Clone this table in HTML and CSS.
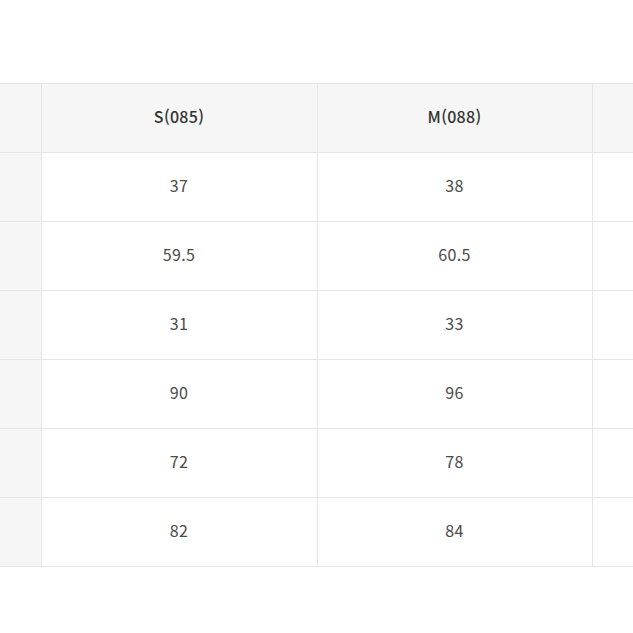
FILE: index.html
```html
<!DOCTYPE html>
<html lang="ko">
<head>
<meta charset="utf-8">
<link rel="stylesheet" href="styles.css">
</head>
<body>
<div class="wrap">
<table class="size-table">
  <colgroup>
    <col class="c-label"><col class="c-size"><col class="c-size2"><col class="c-size">
  </colgroup>
  <thead>
    <tr><th class="label"></th><th>S(085)</th><th>M(088)</th><th></th></tr>
  </thead>
  <tbody>
    <tr><th class="label"></th><td>37</td><td>38</td><td></td></tr>
    <tr><th class="label"></th><td>59.5</td><td>60.5</td><td></td></tr>
    <tr><th class="label"></th><td>31</td><td>33</td><td></td></tr>
    <tr><th class="label"></th><td>90</td><td>96</td><td></td></tr>
    <tr><th class="label"></th><td>72</td><td>78</td><td></td></tr>
    <tr><th class="label"></th><td>82</td><td>84</td><td></td></tr>
  </tbody>
</table>
</div>
</body>
</html>
```
FILE: styles.css
```css
html, body {
  margin: 0;
  padding: 0;
  background: #fff;
  overflow: hidden;
}
.wrap {
  padding-top: 83px;
  width: 633px;
  overflow: hidden;
}
.size-table {
  border-collapse: collapse;
  table-layout: fixed;
  width: 868px;
  font-family: "Noto Sans CJK KR", "Noto Sans", sans-serif;
  font-size: 16px;
  letter-spacing: 0.3px;
  color: #4a4a4a;
}
.c-label { width: 41px; }
.c-size { width: 276px; }
.c-size2 { width: 275px; }
.size-table th,
.size-table td {
  height: 63px;
  padding: 0 0 5px;
  text-align: center;
  vertical-align: middle;
  border: 1px solid #e6e6e6;
  font-weight: 400;
}
.size-table thead th {
  background: #f6f6f6;
  font-weight: 500;
  color: #333;
}
.size-table th.label {
  background: #f6f6f6;
  border-left: none;
}
.size-table td {
  background: #fff;
}
```
